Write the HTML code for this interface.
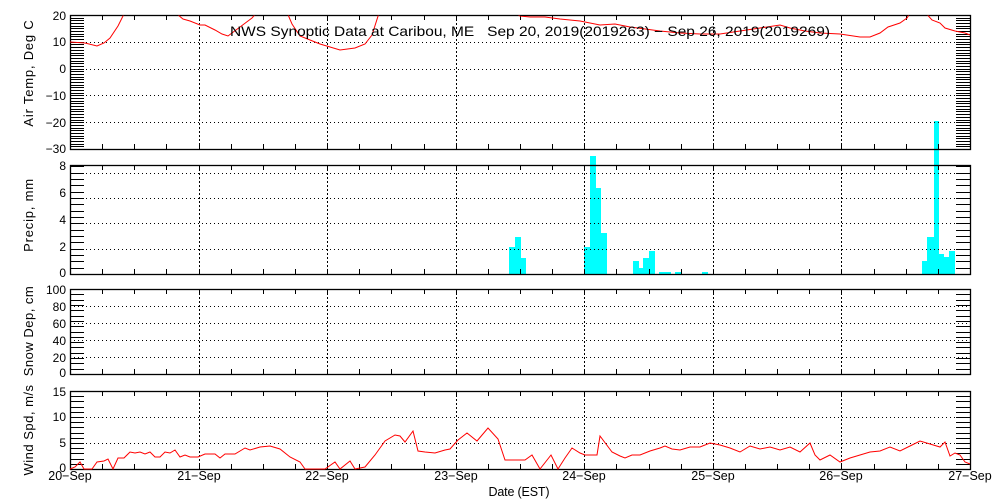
<!DOCTYPE html>
<html><head><meta charset="utf-8"><style>
html,body{margin:0;padding:0;background:#fff;}
svg{display:block;font-family:"Liberation Sans",sans-serif;}
</style></head><body>
<svg id="s" width="1000" height="500" xmlns="http://www.w3.org/2000/svg">
<defs><clipPath id="c1"><rect x="70" y="15.5" width="901" height="134"/></clipPath></defs>
<g id="g"></g>
<g font-size="12" fill="#000" text-anchor="end">
<text x="66" y="20">20</text><text x="66" y="46">10</text><text x="66" y="73">0</text><text x="66" y="100">−10</text><text x="66" y="127">−20</text><text x="66" y="153">−30</text>
<text x="66" y="170">8</text><text x="66" y="197">6</text><text x="66" y="224">4</text><text x="66" y="251">2</text><text x="66" y="277">0</text>
<text x="66" y="294">100</text><text x="66" y="311">80</text><text x="66" y="328">60</text><text x="66" y="345">40</text><text x="66" y="362">20</text><text x="66" y="377">0</text>
<text x="66" y="396">15</text><text x="66" y="421">10</text><text x="66" y="447">5</text><text x="66" y="472">0</text>
</g>
<g font-size="12.5" text-anchor="middle">
<text x="70" y="480">20−Sep</text><text x="199" y="480">21−Sep</text><text x="327" y="480">22−Sep</text><text x="456" y="480">23−Sep</text><text x="584" y="480">24−Sep</text><text x="713" y="480">25−Sep</text><text x="841" y="480">26−Sep</text><text x="970" y="480">27−Sep</text>
<text x="519" y="496" textLength="61">Date (EST)</text>
<text x="530" y="36" font-size="14" textLength="600" lengthAdjust="spacingAndGlyphs" xml:space="preserve">NWS Synoptic Data at Caribou, ME   Sep 20, 2019(2019263) − Sep 26, 2019(2019269)</text>
<text transform="translate(33,73) rotate(-90)" font-size="13" letter-spacing="0.8">Air Temp, Deg C</text>
<text transform="translate(33,215) rotate(-90)" font-size="13" letter-spacing="0.8">Precip, mm</text>
<text transform="translate(33,331) rotate(-90)" font-size="13" letter-spacing="0.5">Snow Dep, cm</text>
<text transform="translate(33,430) rotate(-90)" font-size="13" letter-spacing="0.5">Wind Spd, m/s</text>
</g>
</svg>
<script>
var g=document.getElementById('g'),h='';
function L(x1,y1,x2,y2,st){h+='<line x1="'+x1+'" y1="'+y1+'" x2="'+x2+'" y2="'+y2+'" stroke="#000" stroke-width="1" '+(st||'')+'/>';}
var P=[[15,149,20,-30,1,10],[165,274,8.6,0,0.5,2],[289,374,100,0,6.25,20],[391,469,15,0,1,5]];
var X0=70,X1=970,D=900/7;
var bars=[[509,515,247],[515,521,237],[521,526,258],[584,590,247],[590,596,156],[596,601,188],[601,607,233],[633,639,261],[639,643,268],[643,649,258],[649,655,251],[659,671,272],[675,681,272],[702,708,272],[922,927,261],[927,934,237],[934,939,121],[939,944,254],[944,949,257],[949,955,251]];
bars.forEach(function(b){h+='<rect x="'+b[0]+'" y="'+b[2]+'" width="'+(b[1]-b[0])+'" height="'+(274-b[2])+'" fill="#00ffff"/>';});
P.forEach(function(p,i){
 var t=p[0],b=p[1],top=p[2],bot=p[3];
 function Y(v){return b-(v-bot)/(top-bot)*(b-t);}
 for(var d=1;d<7;d++){var x=Math.round(X0+d*D)+.5;L(x,t,x,b,'stroke-dasharray="2,2"');}
 for(var v=bot+p[5];v<top-0.01;v+=p[5]){var y=Math.round(Y(v))+.5;L(X0,y,X1,y,'stroke-dasharray="1,3"');}
 for(var v=bot;v<=top+0.01;v+=p[4]){var y=Math.round(Y(v))+.5;L(X0,y,X0+14,y);L(X1-14,y,X1,y);}
 for(var q=1;q<28;q++){var x=Math.round(X0+q*D/4)+.5;L(x,t,x,t+5);L(x,b-5,x,b);}
 h+='<rect x="70.5" y="'+(t+.5)+'" width="900" height="'+(b-t)+'" fill="none" stroke="#000" stroke-width="1.3"/>';
});
var temp="70,42 85,43 97,46 104,43 110,38 118,26 126,10 172,10 183,19 190,21 200,25 205,25 215,30 222,34 228,36 236,30 244,24 252,18 259,10 286,10 292,24 300,36 320,44 340,50 355,48 365,44 372,35 380,10 508,10 520,16 530,17 545,17 560,19 580,21 600,25 615,24 630,27 660,31 680,33 700,34 720,34 740,31 760,28 780,25 790,28 805,31 820,33 840,34 860,37 870,37 880,33 888,27 900,23 907,18 912,10 923,10 932,20 940,23 945,28 955,31 965,33 970,35";
var wind="70,469 75,467 80,462 84,469 92,469 97,462 104,461 108,459 113,469 118,458 124,458 130,452 135,453 140,452 145,454 150,452 155,457 160,457 165,452 170,453 175,450 180,457 185,455 190,457 198,457 205,454 215,454 220,458 225,454 235,454 245,448 250,450 260,447 270,446 280,449 290,457 300,462 305,469 315,469 325,469 335,462 340,469 350,461 355,469 365,467 375,455 385,441 395,435 400,436 405,442 413,431 418,451 425,452 435,453 445,450 450,449 458,440 467,433 477,441 488,428 498,439 505,460 525,460 532,455 540,469 551,455 558,469 565,458 572,448 580,453 585,455 597,455 600,436 612,452 620,456 625,458 632,455 640,455 650,451 660,448 665,446 672,449 680,450 690,447 700,447 710,443 720,445 730,448 740,452 750,446 760,449 770,447 780,450 790,447 800,452 810,443 815,455 820,460 830,455 840,462 850,458 860,455 870,452 880,451 890,447 900,451 910,446 920,441 930,444 940,447 945,442 950,456 955,453 960,455 965,462 970,464";
h+='<polyline clip-path="url(#c1)" points="'+temp+'" fill="none" stroke="#ff0000" stroke-width="1"/>';
h+='<polyline points="'+wind+'" fill="none" stroke="#ff0000" stroke-width="1"/>';
g.innerHTML=h;
</script>
</body></html>
